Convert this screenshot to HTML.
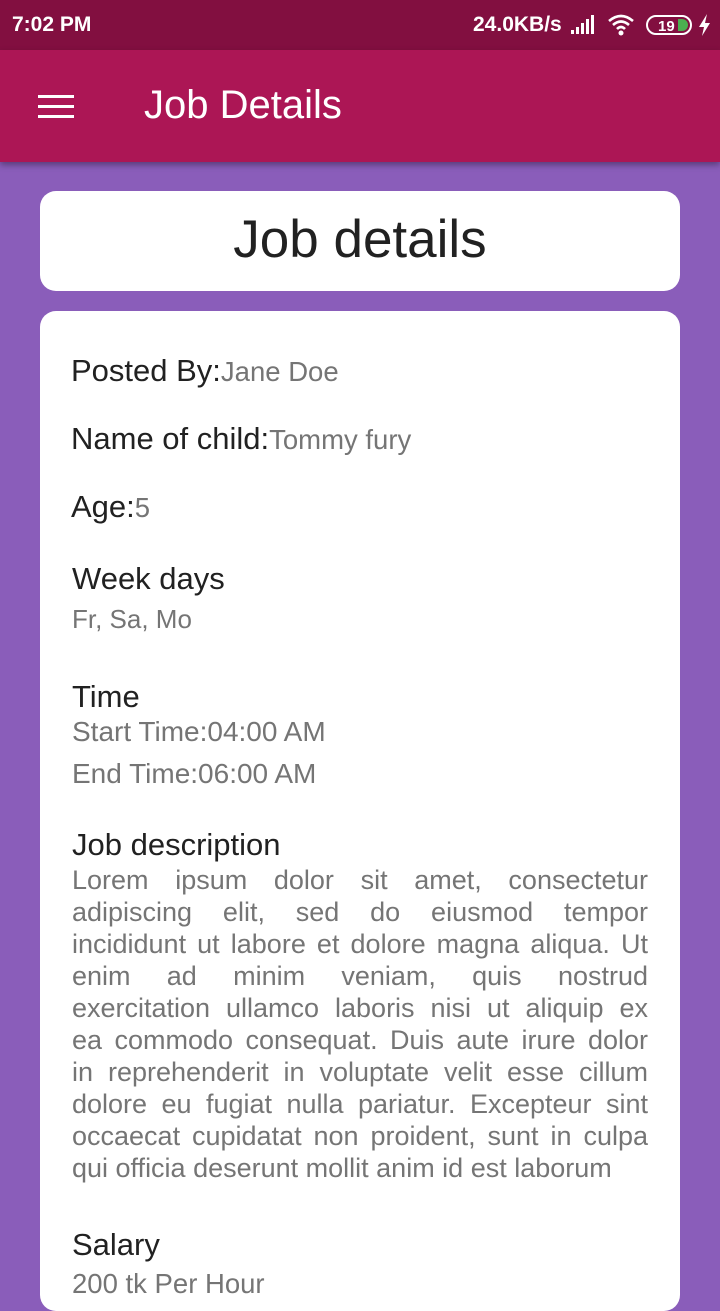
<!DOCTYPE html><html><head><style>
*{margin:0;padding:0;box-sizing:border-box}
body{width:720px;height:1280px;overflow:hidden;background:#8a5dba;font-family:"Liberation Sans",Roboto,sans-serif;position:relative}
.sb{position:absolute;top:0;left:0;width:720px;height:50px;background:#820f40;color:#fff;font-weight:bold;font-size:21px}
.ab{position:absolute;top:50px;left:0;width:720px;height:112px;background:#ac1655;box-shadow:0 3px 6px rgba(0,0,0,.35)}
.card{position:absolute;left:40px;width:640px;background:#fff;border-radius:16px}
.a{position:absolute;white-space:nowrap}
.l{color:#212121;font-size:31px}
.v{color:#757575;font-size:27.5px}
.desc{position:absolute;left:72px;top:864px;width:576px;font-size:27px;line-height:32px;color:#757575}
.desc div{text-align:justify;text-align-last:justify;white-space:nowrap;height:32px}
.desc div.e{text-align-last:left}
</style></head><body>
<div class="sb"><span class="a" style="left:12px;top:13px">7:02 PM</span>
<span class="a" style="left:473px;top:13px">24.0KB/s</span>
<svg class="a" style="left:570px;top:14px" width="28" height="22"><rect x="1" y="16" width="3" height="4" fill="#fff"/><rect x="6" y="13" width="3" height="7" fill="#fff"/><rect x="11" y="9" width="3" height="11" fill="#fff"/><rect x="16" y="5" width="3" height="15" fill="#fff"/><rect x="21" y="1" width="3" height="19" fill="#fff"/></svg>
<svg class="a" style="left:607px;top:13px" width="30" height="24"><path d="M2 8Q14-2 26 8M6 12Q14 5 22 12M10 16Q14 12 18 16" stroke="#fff" stroke-width="2.6" fill="none"/><circle cx="14" cy="20" r="2.5" fill="#fff"/></svg>
<svg class="a" style="left:646px;top:14px" width="48" height="22"><rect x="1" y="2" width="44" height="18" rx="9" stroke="#fff" stroke-width="2" fill="none"/><text x="12" y="17" font-size="15" fill="#fff" font-family="Liberation Sans">19</text><path d="M32 5h4a6 6 0 0 1 0 12h-4z" fill="#4caf50"/></svg>
<svg class="a" style="left:698px;top:14px" width="14" height="22"><path d="M9 0L1 13h5l-2 9 8-13H7z" fill="#fff"/></svg></div>
<div class="ab"><div class="a" style="left:38px;top:45px;width:36px;height:3px;background:#fff;box-shadow:0 10px 0 #fff,0 20px 0 #fff"></div>
<span class="a" style="left:144px;top:33px;color:#fff;font-size:40px">Job Details</span></div>
<div class="card" style="top:191px;height:100px"><div class="a" style="left:0;width:640px;text-align:center;top:18px;font-size:53px;color:#212121">Job details</div></div>
<div class="card" style="top:311px;height:1000px"></div>
<div class="a" style="left:71px;top:353px"><span class="l">Posted By:</span><span class="v">Jane Doe</span></div>
<div class="a" style="left:71px;top:421px"><span class="l">Name of child:</span><span class="v">Tommy fury</span></div>
<div class="a" style="left:71px;top:489px"><span class="l">Age:</span><span class="v">5</span></div>
<div class="a l" style="left:72px;top:561px">Week days</div>
<div class="a v" style="left:72px;top:604px;font-size:26px">Fr, Sa, Mo</div>
<div class="a l" style="left:72px;top:679px">Time</div>
<div class="a v" style="left:72px;top:716px;font-size:28px">Start Time:04:00 AM</div>
<div class="a v" style="left:72px;top:758px;font-size:28px">End Time:06:00 AM</div>
<div class="a l" style="left:72px;top:827px">Job description</div>
<div class="desc">
<div>Lorem ipsum dolor sit amet, consectetur</div>
<div>adipiscing elit, sed do eiusmod tempor</div>
<div>incididunt ut labore et dolore magna aliqua. Ut</div>
<div>enim ad minim veniam, quis nostrud</div>
<div>exercitation ullamco laboris nisi ut aliquip ex</div>
<div>ea commodo consequat. Duis aute irure dolor</div>
<div>in reprehenderit in voluptate velit esse cillum</div>
<div>dolore eu fugiat nulla pariatur. Excepteur sint</div>
<div>occaecat cupidatat non proident, sunt in culpa</div>
<div class="e">qui officia deserunt mollit anim id est laborum</div>
</div>
<div class="a l" style="left:72px;top:1227px">Salary</div>
<div class="a v" style="left:72px;top:1268px">200 tk Per Hour</div>
</body></html>
